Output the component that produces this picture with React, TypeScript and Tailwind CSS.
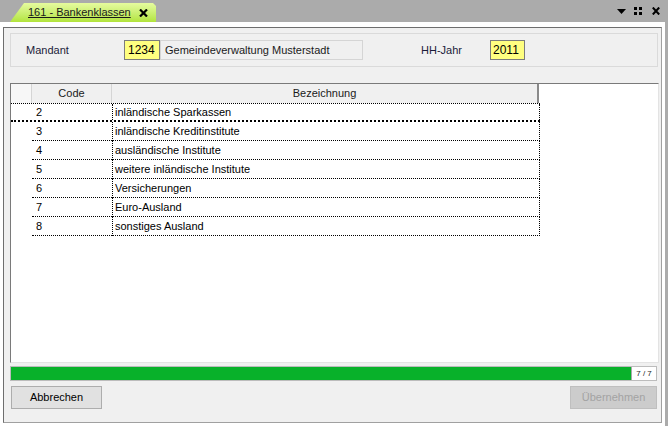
import React from "react";

const rows = [
  ["2", "inländische Sparkassen"],
  ["3", "inländische Kreditinstitute"],
  ["4", "ausländische Institute"],
  ["5", "weitere inländische Institute"],
  ["6", "Versicherungen"],
  ["7", "Euro-Ausland"],
  ["8", "sonstiges Ausland"],
];

export default function App() {
  return (
    <div className="w-[668px] h-[426px] bg-[#ababab] flex flex-col overflow-hidden text-[11px] text-black [font-family:'Liberation_Sans',Arial,sans-serif]">
      {/* top bar */}
      <div className="h-[22px] flex items-end shrink-0">
        <div className="ml-[10px] w-[146px] h-[19px] bg-gradient-to-b from-[#e6fb9e] to-[#b2e43a] [clip-path:polygon(0_100%,14px_0,calc(100%-3px)_0,100%_3px,100%_100%)] flex items-center">
          <span className="ml-[18px] underline text-[#1a1a1a] leading-none">161 - Bankenklassen</span>
          <svg className="ml-[8px]" width="9" height="8" viewBox="0 0 9 8">
            <path d="M1 0.5 L8 7.5 M8 0.5 L1 7.5" stroke="#000" strokeWidth="2.2" />
          </svg>
        </div>
        <div className="flex-1" />
        <div className="flex items-center h-[22px] gap-[7px] mr-[8px]">
          <svg width="9" height="5" viewBox="0 0 9 5">
            <path d="M0 0 H9 L4.5 5 Z" fill="#000" />
          </svg>
          <svg width="8" height="8" viewBox="0 0 8 8" className="ml-[1px]">
            <rect x="0" y="0" width="3" height="3" fill="#000" />
            <rect x="5" y="0" width="3" height="3" fill="#000" />
            <rect x="0" y="5" width="3" height="3" fill="#000" />
            <rect x="5" y="5" width="3" height="3" fill="#000" />
          </svg>
          <svg width="8" height="8" viewBox="0 0 8 8" className="ml-[3px]">
            <path d="M0.8 0.5 L7.2 7.5 M7.2 0.5 L0.8 7.5" stroke="#000" strokeWidth="2" />
          </svg>
        </div>
      </div>

      {/* panel */}
      <div className="w-[665px] flex-1 bg-white pt-[5px] px-[3px] pb-[3px] flex">
        <div className="flex-1 bg-[#f0f0f0] border-t border-l border-[#6e6e6e] border-r-[#a0a0a0] border-b-[#a0a0a0] border-r border-b pl-[6px] pt-[5px] flex flex-col">
          {/* group box */}
          <div className="w-[648px] h-[34px] border border-[#dadada] flex items-center pl-[15px]">
            <div className="w-[98px] text-[#1b1b3a]">Mandant</div>
            <div className="w-[36px] h-[20px] bg-[#ffff80] border border-[#7c7c7c] flex items-center pl-[3px] text-[12px]">1234</div>
            <div className="w-[203px] h-[20px] border border-[#d5d5d5] flex items-center pl-[4px] text-[#1a1a1a]">Gemeindeverwaltung Musterstadt</div>
            <div className="ml-[58px] w-[69px] text-[#1b1b3a]">HH-Jahr</div>
            <div className="w-[35px] h-[20px] bg-[#ffff80] border border-[#7c7c7c] flex items-center pl-[2px] text-[12px]">2011</div>
          </div>

          {/* grid */}
          <div className="mt-[16px] w-[649px] h-[280px] bg-white border-t border-l border-[#7a7a7a] border-r-[#e3e3e3] border-b-[#e3e3e3] border-r border-b flex flex-col">
            <div className="flex h-[19px] shrink-0">
              <div className="w-[21px] bg-[#f7f7f7] border-r border-[#d5d5d5]" />
              <div className="w-[80px] bg-[#f0f0f0] border-r border-[#d5d5d5] flex items-center justify-center text-[#1a1a1a]">Code</div>
              <div className="w-[427px] bg-[#f0f0f0] border-r-2 border-[#8a8a8a] flex items-center justify-center text-[#1a1a1a]">Bezeichnung</div>
            </div>
            {rows.map(([code, name], i) => (
              <div
                key={code}
                className={
                  i === 0
                    ? "flex h-[19px] w-[529px] border-t border-b-2 border-dotted border-black"
                    : "flex h-[19px] w-[529px]"
                }
              >
                <div className="w-[21px]" />
                <div
                  className={
                    i === 0
                      ? "w-[80px] flex items-center pl-[4px]"
                      : "w-[80px] flex items-center pl-[4px] border-b border-dotted border-black"
                  }
                >
                  {code}
                </div>
                <div
                  className={
                    i === 0
                      ? "w-[428px] flex items-center pl-[2px] border-l border-r border-dotted border-black"
                      : "w-[428px] flex items-center pl-[2px] border-l border-r border-b border-dotted border-black"
                  }
                >
                  {name}
                </div>
              </div>
            ))}
          </div>

          {/* progress */}
          <div className="mt-[3px] w-[647px] h-[15px] border border-[#bcbcbc] flex">
            <div className="flex-1 bg-[#08b12a]" />
            <div className="w-[25px] bg-white border-l border-[#a8a8a8] flex items-center justify-center text-[8px] text-[#222]">7 / 7</div>
          </div>

          {/* buttons */}
          <div className="mt-[5px] w-[647px] flex justify-between">
            <div className="ml-[1px] w-[91px] h-[23px] bg-[#e1e1e1] border border-[#adadad] flex items-center justify-center">Abbrechen</div>
            <div className="w-[87px] h-[23px] bg-[#cccccc] border border-[#bfbfbf] flex items-center justify-center text-[#a3a3a3]">Übernehmen</div>
          </div>
        </div>
      </div>
    </div>
  );
}
